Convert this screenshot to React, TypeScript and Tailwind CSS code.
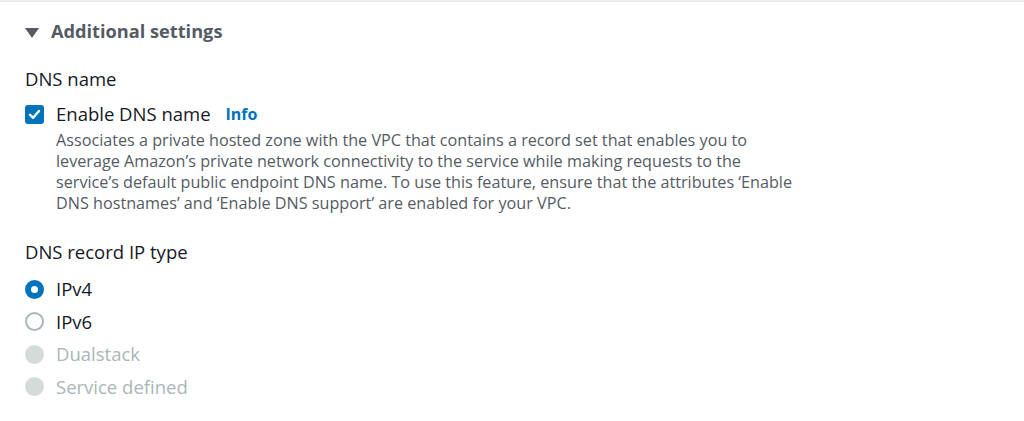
import React from "react";

const radios = [
  { label: "IPv4", state: "checked" },
  { label: "IPv6", state: "idle" },
  { label: "Dualstack", state: "disabled" },
  { label: "Service defined", state: "disabled" },
];

function Radio({ state }: { state: string }) {
  if (state === "checked") {
    return (
      <span className="w-[19px] h-[19px] rounded-full border-[6px] border-[#0073bb] bg-white box-border shrink-0" />
    );
  }
  if (state === "disabled") {
    return <span className="w-[19px] h-[19px] rounded-full bg-[#d5dbdb] shrink-0" />;
  }
  return (
    <span className="w-[19px] h-[19px] rounded-full border-2 border-[#aab7b8] bg-white box-border shrink-0" />
  );
}

export default function App() {
  return (
    <div
      className="w-full h-[421px] bg-white border-t-2 border-[#eaeded] pl-[25px] text-[#16191f]"
      style={{ fontFamily: '"Open Sans", "Noto Sans", sans-serif' }}
    >
      <div className="mt-[19px] h-[22px] flex items-center gap-[12px] text-[#545b64]">
        <svg width="14" height="10" viewBox="0 0 14 10" className="mt-[1px]">
          <path d="M0 0 H14 L7 10 Z" fill="#545b64" />
        </svg>
        <span className="text-[18.2px] font-bold">Additional settings</span>
      </div>

      <div className="mt-[24px] h-[24px] flex items-center text-[18.5px]">DNS name</div>

      <div className="mt-[11px] h-[24px] flex items-center">
        <span className="w-[19px] h-[19px] rounded-[3px] bg-[#0073bb] flex items-center justify-center shrink-0">
          <svg width="13" height="13" viewBox="0 0 13 13">
            <path d="M2 6.8 L5.2 9.8 L11 3" fill="none" stroke="white" strokeWidth="2.4" strokeLinecap="round" strokeLinejoin="round" />
          </svg>
        </span>
        <span className="ml-[12px] text-[18.5px]">Enable DNS name</span>
        <span className="ml-[15px] text-[16px] font-bold text-[#0073bb]">Info</span>
      </div>

      <p className="mt-[4px] ml-[31px] max-w-[800px] text-[16.2px] leading-[21px] text-[#545b64]">
        Associates a private hosted zone with the VPC that contains a record set that enables you to
        <br />
        leverage Amazon’s private network connectivity to the service while making requests to the
        <br />
        service’s default public endpoint DNS name. To use this feature, ensure that the attributes ‘Enable
        <br />
        DNS hostnames’ and ‘Enable DNS support’ are enabled for your VPC.
      </p>

      <div className="mt-[26px] h-[24px] flex items-center text-[18.5px]">DNS record IP type</div>

      <div className="mt-[13px] flex flex-col gap-[8.5px]">
        {radios.map((r) => (
          <div key={r.label} className="h-[24px] flex items-center">
            <Radio state={r.state} />
            <span
              className={
                "ml-[12px] text-[18.5px] " + (r.state === "disabled" ? "text-[#aab7b8]" : "text-[#16191f]")
              }
            >
              {r.label}
            </span>
          </div>
        ))}
      </div>
    </div>
  );
}
